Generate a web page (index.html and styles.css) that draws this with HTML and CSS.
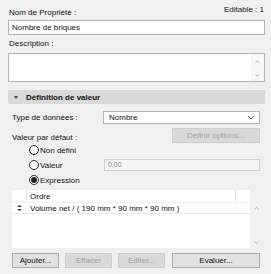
FILE: index.html
```html
<!DOCTYPE html>
<html lang="fr">
<head>
  <meta charset="UTF-8">
  <title>Propriété</title>
  <link rel="stylesheet" href="styles.css">
</head>
<body>
  <div class="panel">

    <!-- Name -->
    <div class="top-row">
      <span class="label">Nom de Propriété :</span>
      <span class="editable">Editable : 1</span>
    </div>
    <div class="field">Nombre de briques</div>

    <!-- Description -->
    <div class="label desc-label">Description :</div>
    <div class="textarea">
      <div class="scroll">
        <svg width="5" height="3" viewBox="0 0 5 3"><path d="M0.5 2.5 L2.5 0.5 L4.5 2.5" fill="none" stroke="#b5b5b5" stroke-width="1"/></svg>
        <svg width="5" height="3" viewBox="0 0 5 3"><path d="M0.5 0.5 L2.5 2.5 L4.5 0.5" fill="none" stroke="#b5b5b5" stroke-width="1"/></svg>
      </div>
    </div>

    <!-- Value definition -->
    <div class="section-head">
      <span class="tri"></span>
      <span>Définition de valeur</span>
    </div>

    <div class="form-row type-row">
      <span class="label">Type de données :</span>
      <div class="select">
        <span>Nombre</span>
        <svg width="8" height="5" viewBox="0 0 8 5"><path d="M1 1 L4 4 L7 1" fill="none" stroke="#555" stroke-width="1"/></svg>
      </div>
    </div>

    <div class="form-row default-row">
      <span class="label">Valeur par défaut :</span>
      <div class="btn disabled wide">Définir options...</div>
    </div>

    <div class="radio-row r1">
      <span class="radio"></span><span>Non défini</span>
    </div>
    <div class="radio-row r2">
      <span class="radio"></span><span class="radio-text">Valeur</span>
      <div class="value-field">0,00</div>
    </div>
    <div class="radio-row r3">
      <span class="radio checked"></span><span>Expression</span>
    </div>

    <!-- Expression list -->
    <div class="list-wrap">
      <div class="list">
        <div class="list-head">
          <span class="col-icon"></span>
          <span class="col-main">Ordre</span>
          <span class="col-end"></span>
        </div>
        <div class="list-row">
          <span class="col-icon">
            <svg width="5" height="6" viewBox="0 0 5 6"><path d="M2.5 0 L5 2 L0 2 Z M0 4 L5 4 L2.5 6 Z" fill="#333"/></svg>
          </span>
          <span class="col-main">Volume net / ( 190 mm * 90 mm * 90 mm )</span>
        </div>
      </div>
      <div class="scroll list-scroll">
        <svg width="5" height="3" viewBox="0 0 5 3"><path d="M0.5 2.5 L2.5 0.5 L4.5 2.5" fill="none" stroke="#b5b5b5" stroke-width="1"/></svg>
        <svg width="5" height="3" viewBox="0 0 5 3"><path d="M0.5 0.5 L2.5 2.5 L4.5 0.5" fill="none" stroke="#b5b5b5" stroke-width="1"/></svg>
      </div>
    </div>

    <div class="buttons">
      <div class="btn small">Ajouter...</div>
      <div class="btn small disabled">Effacer</div>
      <div class="btn small disabled">Editer...</div>
      <div class="btn wide">Evaluer...</div>
    </div>

  </div>
</body>
</html>
```

FILE: styles.css
```css
/* General */
* {
  margin: 0;
  padding: 0;
  box-sizing: border-box;
}

body {
  font-family: "Liberation Sans", Arial, sans-serif;
  font-size: 8px;
  color: #111;
  background-color: #f0f0f0;
  width: 271px;
  height: 274px;
  overflow: hidden;
}

.panel {
  padding: 4px 6px 0 8px;
}

/* Name + description */
.top-row {
  display: flex;
  justify-content: space-between;
  height: 16px;
}

.top-row .label {
  padding-top: 4px;
  padding-left: 1px;
}

.editable {
  padding-top: 1px;
  padding-right: 1px;
}

.field {
  height: 15px;
  background: #fff;
  border: 1px solid #b4b4b4;
  padding: 2px 0 0 3px;
}

.desc-label {
  height: 18px;
  padding-top: 4px;
  padding-left: 1px;
}

.textarea {
  height: 29px;
  background: #fff;
  border: 1px solid #b4b4b4;
  display: flex;
  justify-content: flex-end;
}

.scroll {
  width: 13px;
  background: #f7f7f7;
  display: flex;
  flex-direction: column;
  justify-content: space-between;
  align-items: center;
  padding: 6px 0 4px;
}

/* Section header */
.section-head {
  margin-top: 8px;
  height: 14px;
  background: #d9d9d9;
  display: flex;
  align-items: center;
  font-weight: bold;
  font-size: 8px;
}

.tri {
  width: 0;
  height: 0;
  border-left: 2.5px solid transparent;
  border-right: 2.5px solid transparent;
  border-top: 3px solid #444;
  margin: 0 8px 0 6px;
}

/* Form rows */
.form-row {
  display: flex;
  align-items: center;
  justify-content: space-between;
  padding-left: 4px;
  padding-right: 5px;
}

.type-row {
  margin-top: 7px;
  height: 13px;
}

.select {
  width: 157px;
  height: 13px;
  background: #fff;
  border: 1px solid #b4b4b4;
  display: flex;
  align-items: center;
  justify-content: space-between;
  padding: 0 4px 0 5px;
}

.default-row {
  margin-top: 4px;
  height: 15px;
  align-items: flex-end;
}

.default-row .label {
  padding-bottom: 1px;
}

.btn {
  height: 15px;
  display: flex;
  align-items: center;
  justify-content: center;
  background: #e1e1e1;
  border: 1px solid #adadad;
}

.btn.disabled {
  background: #d9d9d9;
  border-color: #cfcfcf;
  color: #a3a3a3;
}

.btn.wide {
  width: 88px;
}

.btn.small {
  width: 47px;
}

/* Radios */
.radio-row {
  display: flex;
  align-items: center;
  padding-left: 21px;
  padding-right: 5px;
  height: 12px;
}

.r1 {
  margin-top: 1px;
}

.r2 {
  margin-top: 3px;
}

.r3 {
  margin-top: 3px;
}

.radio {
  width: 10px;
  height: 10px;
  border: 1px solid #333;
  border-radius: 50%;
  background: #fafafa;
  margin-right: 1px;
  display: flex;
  align-items: center;
  justify-content: center;
}

.radio.checked::after {
  content: "";
  width: 6px;
  height: 6px;
  border-radius: 50%;
  background: #222;
}

.radio-text {
  flex: 1;
}

.value-field {
  width: 156px;
  height: 12px;
  background: #f4f4f4;
  border: 1px solid #cfcfcf;
  color: #8a8a8a;
  font-size: 7px;
  padding: 1px 0 0 3px;
}

/* Expression list */
.list-wrap {
  margin-top: 4px;
  margin-left: 4px;
  margin-right: 2px;
  height: 58px;
  display: flex;
}

.list {
  flex: 1;
  background: #fff;
}

.list-head {
  display: flex;
  height: 13px;
  align-items: center;
  border-bottom: 1px solid #f0f0f0;
}

.list-head .col-icon {
  align-self: stretch;
  border-right: 1px solid #e2e2e2;
}

.list-head .col-end {
  width: 15px;
  align-self: stretch;
  border-left: 1px solid #e2e2e2;
}

.col-icon {
  width: 15px;
  display: flex;
  align-items: center;
  justify-content: center;
}

.col-main {
  flex: 1;
  padding-left: 3px;
}

.list-row {
  display: flex;
  align-items: center;
  height: 11px;
  border-bottom: 1px solid #e8e8e8;
}

.list-scroll {
  background: #f0f0f0;
  padding: 17px 0 4px;
}

/* Bottom buttons */
.buttons {
  display: flex;
  gap: 6px;
  margin-top: 5px;
  padding-left: 4px;
  padding-right: 5px;
}

.buttons .btn.wide {
  margin-left: auto;
}
```
